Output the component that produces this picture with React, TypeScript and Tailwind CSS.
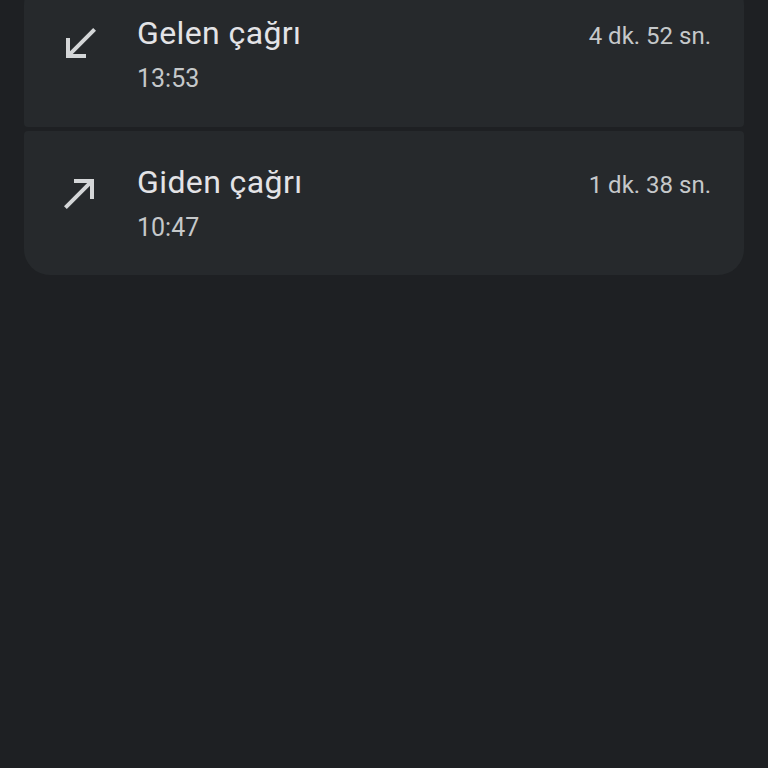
const calls = [
  { label: "Gelen çağrı", time: "13:53", duration: "4 dk. 52 sn.", dir: "in" },
  { label: "Giden çağrı", time: "10:47", duration: "1 dk. 38 sn.", dir: "out" },
];

function CallIcon({ dir }: { dir: string }) {
  return (
    <svg className="size-12 shrink-0 mt-[5px]" viewBox="0 0 24 24" fill="#d4d6d8">
      {dir === "in" ? (
        <path d="M20 5.41L18.59 4 7 15.59V9H5v10h10v-2H8.41z" />
      ) : (
        <path d="M9 5v2h6.59L4 18.59 5.41 20 17 8.41V15h2V5z" />
      )}
    </svg>
  );
}

export default function App() {
  return (
    <div
      className="min-h-[768px] w-full bg-[#1e2023] px-6 overflow-hidden"
      style={{ fontFamily: "Roboto, 'Noto Sans', sans-serif" }}
    >
      <div className="flex flex-col gap-1 -mt-[21px]">
        {calls.map((call, i) => (
          <div
            key={call.time}
            className={`bg-[#26292c] flex items-start pl-8 pr-[33px] ${
              i === calls.length - 1
                ? "rounded-t-[4px] rounded-b-[26px] pt-[33px] pb-[31px]"
                : "rounded-t-[26px] rounded-b-[4px] pt-[36px] pb-[32px]"
            }`}
          >
            <CallIcon dir={call.dir} />
            <div className="flex-1 ml-[33px]">
              <div className="flex items-baseline justify-between">
                <span className="text-[32px] leading-9 tracking-[0.4px] text-[#e3e3e6]">{call.label}</span>
                <span className="text-[24px] leading-8 text-[#c5c8ca]">{call.duration}</span>
              </div>
              <div className="text-[25px] leading-8 text-[#c5c8ca] mt-[11px]">{call.time}</div>
            </div>
          </div>
        ))}
      </div>
    </div>
  );
}
